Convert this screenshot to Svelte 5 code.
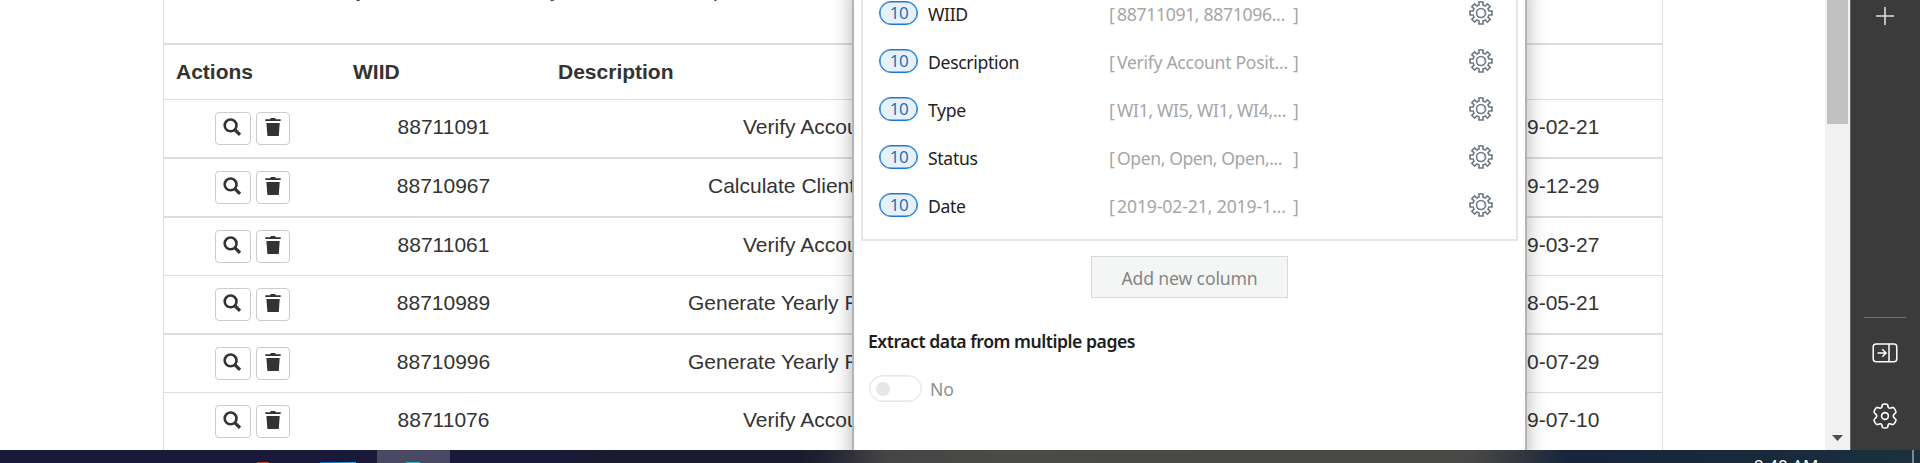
<script>
  const rows = [
    { id: '88711091', desc: 'Verify Accou', x: 743, date: '9-02-21', h: 59, line: 2 },
    { id: '88710967', desc: 'Calculate Client', x: 708, date: '9-12-29', h: 59, line: 2 },
    { id: '88711061', desc: 'Verify Accou', x: 743, date: '9-03-27', h: 58, line: 1 },
    { id: '88710989', desc: 'Generate Yearly R', x: 688, date: '8-05-21', h: 59, line: 2 },
    { id: '88710996', desc: 'Generate Yearly R', x: 688, date: '0-07-29', h: 58, line: 1 },
    { id: '88711076', desc: 'Verify Accou', x: 743, date: '9-07-10', h: 58, line: 0 }
  ];
  const columns = [
    { name: 'WIID', sample: '88711091, 8871096...', sp: -0.33 },
    { name: 'Description', sample: 'Verify Account Posit...', sp: -0.3 },
    { name: 'Type', sample: 'WI1, WI5, WI1, WI4,...', sp: -0.33 },
    { name: 'Status', sample: 'Open, Open, Open,...', sp: -0.42 },
    { name: 'Date', sample: '2019-02-21, 2019-1...', sp: -0.12 }
  ];

  // Outline of a toothed wheel centred on the origin.
  function wheel(teeth, outer, inner, top, base) {
    const pts = [];
    for (let i = 0; i < teeth; i++) {
      const a = (i * 2 * Math.PI) / teeth - Math.PI / 2;
      for (const [r, d] of [[inner, -base], [outer, -top], [outer, top], [inner, base]]) {
        pts.push(`${(r * Math.cos(a + d)).toFixed(2)} ${(r * Math.sin(a + d)).toFixed(2)}`);
      }
    }
    return 'M' + pts.join('L') + 'Z';
  }
  const gear8 = wheel(8, 11.2, 8.2, 0.18, 0.24);
</script>

<div class="screen">
  <div class="desktop">
    <main class="page">
      <div class="table">
        <div class="intro"><span class="f1">y</span><span class="f2">y</span><span class="f3">p</span></div>
        <div class="head">
          <span class="c-act">Actions</span><span class="c-id">WIID</span><span>Description</span>
        </div>
        {#each rows as r}
          <div class="row" style="height:{r.h}px;border-bottom-width:{r.line}px">
            <div class="actions">
              <button class="view" aria-label="View">
                <svg width="18" height="18" viewBox="0 0 18 18"><circle cx="7.6" cy="7.4" r="5.9" fill="none" stroke="#333" stroke-width="2.6" /><path d="M12 11.8L17 16.8" stroke="#333" stroke-width="3.1" /></svg>
              </button>
              <button class="del" aria-label="Delete">
                <svg width="16" height="18" viewBox="0 0 16 18"><path fill="#333" d="M.3 1.3H5L6 .1h4l1 1.2h4.700v1.800H.3zM1.400 5h13.300l-.9 13H2.400z" /></svg>
              </button>
            </div>
            <div class="id">{r.id}</div>
            <div class="desc"><span style="margin-left:{r.x - 544}px">{r.desc}</span></div>
            <div class="date">{r.date}</div>
          </div>
        {/each}
      </div>
    </main>

    <section class="dialog">
      <div class="box">
        {#each columns as c}
          <div class="col">
            <span class="badge">10</span>
            <span class="name">{c.name}</span>
            <span class="sample"><span class="br">[</span><span class="val" style="letter-spacing:{c.sp}px">{c.sample}</span><span class="br">]</span></span>
            <svg class="gear" width="24" height="24" viewBox="-12 -12 24 24" fill="none" stroke="#6b7885" stroke-width="1.6"><path d={gear8} /><circle r="4.5" /></svg>
          </div>
        {/each}
      </div>
      <button class="add">Add new column</button>
      <h2>Extract data from multiple pages</h2>
      <div class="toggle"><span class="switch"><i></i></span><span class="no">No</span></div>
    </section>

    <div class="scroll">
      <div class="thumb"></div>
      <svg width="11" height="6" viewBox="0 0 11 6"><path d="M0 0h11L5.500 6z" fill="#505050" /></svg>
    </div>

    <aside>
      <svg class="plus" width="20" height="20" viewBox="0 0 20 20"><path d="M1 10h18M10 1v18" stroke="#dedede" stroke-width="1.6" /></svg>
      <div class="bottom">
        <div class="rule"></div>
        <svg class="side" width="26" height="20" viewBox="0 0 26 20" fill="none" stroke="#fff" stroke-width="1.5"><rect x="1.200" y="1" width="23.600" height="17.800" rx="3" /><path d="M17 1v18M5.500 10h8M10.300 6.300l3.700 3.700-3.700 3.700" /></svg>
        <svg class="cog" width="26" height="26" viewBox="-13 -13 26 26" fill="none" stroke="#fff" stroke-width="1.6" stroke-linejoin="round"><path d="M-2.600-11.200Q-2.300-12 0-12T2.600-11.200L3.200-8.800Q3.800-7.500 5.400-7.900L7.700-8.600Q8.700-8.700 9.800-6.900T11-3.700L9.300-1.900Q8.200-.6 8.200 0T9.300 1.900L11 3.700Q10.900 5.200 9.800 6.900T7.700 8.600L5.400 7.900Q3.800 7.500 3.200 8.800L2.600 11.200Q2.300 12 0 12T-2.600 11.200L-3.200 8.800Q-3.800 7.500-5.400 7.900L-7.700 8.600Q-8.700 8.700-9.800 6.900T-11 3.700L-9.300 1.900Q-8.200 .6-8.200 0T-9.300-1.900L-11-3.700Q-10.900-5.200-9.800-6.900T-7.700-8.600L-5.400-7.900Q-3.800-7.500-3.200-8.800Z" /><circle r="3.400" /></svg>
      </div>
    </aside>
  </div>

  <footer>
    <i class="app red"></i><i class="app blue"></i>
    <div class="active"><i></i></div>
    <span class="time">9:40 AM</span>
    <i class="peek"></i>
  </footer>
</div>

<style>
  :global(body) { margin: 0; overflow: hidden; }
  .screen { width: 1920px; height: 463px; overflow: hidden; display: flex; flex-direction: column; background: #fff; }
  .desktop { position: relative; height: 450px; flex: none; display: flex; overflow: hidden; }
  button { box-sizing: border-box; margin: 0; font: inherit; }
  svg { display: block; flex: none; }
  .page { width: 1825px; height: 450px; overflow: hidden; font: 21px/30px "Liberation Sans", Arial, sans-serif; color: #333; }
  .table { box-sizing: border-box; width: 1500px; height: 450px; margin-left: 163px; border: solid #ddd; border-width: 0 1px; overflow: hidden; }
  .intro { height: 43px; border-bottom: 2px solid #ddd; overflow: hidden; display: flex; line-height: 24px; }
  .intro span { margin-top: -22px; height: 24px; }
  .f1 { margin-left: 192px; width: 194px; }
  .f2 { width: 163px; }
  .head { box-sizing: border-box; height: 55px; border-bottom: 1px solid #ddd; display: flex; padding: 12px 0 0 12px; font-weight: bold; }
  .c-act { width: 177px; }
  .c-id { width: 205px; }
  .row { box-sizing: border-box; border-bottom: 0 solid #ddd; display: flex; align-items: flex-start; padding-top: 12px; white-space: nowrap; }
  .actions { width: 179px; display: flex; gap: 5px; padding-left: 51px; box-sizing: border-box; }
  .actions button { display: flex; align-items: flex-start; height: 33px; background: #fff; border: 1px solid #ccc; border-radius: 4px; padding: 5px 0 0 7px; }
  .view { width: 36px; }
  .actions .del { width: 34px; padding-left: 8px; }
  .id { width: 201px; text-align: center; }
  .desc { width: 983px; overflow: hidden; display: flex; }
  .date { width: 90px; }

  .dialog { position: absolute; left: 852px; top: -20px; width: 671px; height: 490px; border: solid #b2b3b5; border-width: 0 2px; background: #fff; box-shadow: 0 0 19px rgba(0, 0, 0, .3); font: 17.6px/24px "Noto Sans", "Open Sans", sans-serif; color: #222; }
  .box { box-sizing: border-box; margin: 0 7px; width: 657px; height: 261px; border: 2px solid #e6e6e6; padding: 19px 23px 0 16px; display: flex; flex-direction: column; gap: 24px; }
  .col { height: 24px; flex: none; display: flex; align-items: flex-start; }
  .badge { box-sizing: border-box; width: 39px; height: 24px; border: 1px solid #1c78d4; box-shadow: inset 0 0 0 .5px #1c78d4; border-radius: 12px; background: #e8f0fa; color: #2e70b4; line-height: 22px; text-align: center; font-size: 17px; letter-spacing: -.5px; padding-left: 1px; }
  .name { margin-left: 10px; width: 181px; letter-spacing: -.32px; padding-top: 1px; }
  .sample { width: 191px; display: flex; color: #a6a6a6; padding-top: 1px; white-space: nowrap; }
  .val { width: 176px; margin-left: 2px; }
  .br { width: 6px; }
  .gear { margin-left: auto; }
  .add { display: block; margin: 15px 0 0 237px; width: 197px; height: 42px; border: 1px solid #d6dada; background: #f4f6f6; color: #858585; padding: 1px 0 0 0; letter-spacing: -.15px; }
  h2 { margin: 31px 0 0 14px; font-size: 17.6px; line-height: 24px; font-weight: 600; letter-spacing: -.46px; color: #1c1c1c; white-space: nowrap; }
  .toggle { display: flex; margin: 22px 0 0 15px; gap: 8px; }
  .switch { box-sizing: border-box; width: 53px; height: 27px; border: 1px solid #e6e6e6; box-shadow: inset 0 0 0 .5px #e6e6e6; border-radius: 14px; padding: 6px; }
  .switch i { display: block; width: 14px; height: 14px; border-radius: 7px; background: #e6e6e6; }
  .no { color: #8f8f8f; padding-top: 2px; }

  .scroll { width: 25px; background: #f1f1f1; display: flex; flex-direction: column; align-items: center; justify-content: space-between; padding-bottom: 9px; box-sizing: border-box; height: 450px; }
  .thumb { width: 21px; height: 124px; background: #c1c1c1; }
  aside { box-sizing: border-box; width: 70px; height: 450px; border-left: 1px solid #6a6a6a; background: #3b3b3b; display: flex; flex-direction: column; align-items: center; justify-content: space-between; padding-right: 1px; }
  .plus { margin-top: 6px; }
  .bottom { display: flex; flex-direction: column; align-items: center; }
  .rule { width: 42px; height: 1px; background: #707070; }
  .side { margin-top: 25px; }
  .cog { margin: 40px 0 21px; }

  footer { height: 13px; flex: none; display: flex; overflow: hidden; background: linear-gradient(90deg, #191a3b 0, #191a3a 560px, #1a1b2c 610px, #1a1b2d 800px, #242532 830px, #454545 885px, #4a4a48 1000px, #484847 1470px, #35393f 1515px, #18253c 1565px, #182a3a 1750px, #1c303e 1920px); }
  .app { height: 1px; margin-top: 12px; }
  .red { width: 12px; margin-left: 257px; background: #d3402f; }
  .blue { width: 36px; margin-left: 51px; background: linear-gradient(90deg, #0866d4, #29a9ea); }
  .active { width: 73px; margin-left: 21px; background: #4a4964; }
  .active i { display: block; width: 14px; height: 1px; margin: 12px 0 0 29px; background: #2bbccb; }
  .time { width: 158px; margin: 6px 0 0 1304px; height: 20px; font: 17px/20px "Noto Sans", sans-serif; color: #fff; white-space: nowrap; }
  .peek { width: 2px; background: #7d8890; }
</style>
